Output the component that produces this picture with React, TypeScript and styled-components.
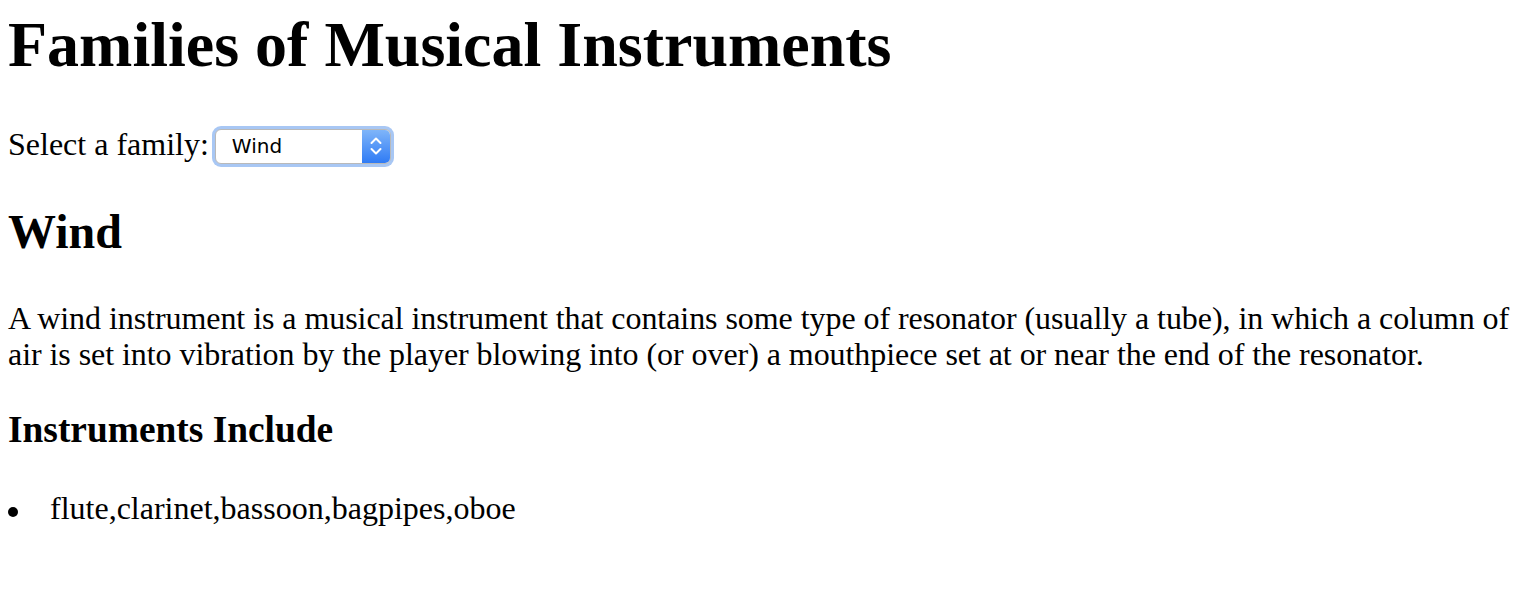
import React from 'react'
import styled, { createGlobalStyle } from 'styled-components'

const GlobalStyle = createGlobalStyle`
  body {
    margin: 8px;
    background: #fff;
    color: #000;
    font-family: "Liberation Serif", "Times New Roman", serif;
    font-size: 32px;
  }
`

const Title = styled.h1`
  font-size: 64px;
  font-weight: bold;
  line-height: 74px;
  margin: 0;
`

const PickerRow = styled.div`
  display: flex;
  align-items: center;
  gap: 6px;
  margin-top: 46px;
  height: 36px;
`

const PickerLabel = styled.label`
  line-height: 32px;
  margin-bottom: 4px;
`

const SelectFrame = styled.div`
  box-sizing: border-box;
  display: flex;
  width: 176px;
  height: 35px;
  border: 1px solid #b9b9b9;
  border-radius: 6px;
  box-shadow: 0 0 0 3px #a8c7f4;
  background: #fff;
  overflow: hidden;
`

const NativeSelect = styled.select`
  appearance: none;
  flex: 1;
  border: none;
  outline: none;
  background: transparent;
  padding: 0 0 0 16px;
  font-family: "DejaVu Sans", "Liberation Sans", sans-serif;
  font-size: 20px;
  color: #000;
`

const Stepper = styled.span`
  display: flex;
  align-items: center;
  justify-content: center;
  width: 28px;
  background: linear-gradient(#7fb5f9, #2f7bf5);
`

const Heading = styled.h2`
  font-size: 48px;
  font-weight: bold;
  line-height: 56px;
  margin: 40px 0 0;
`

const Paragraph = styled.p`
  line-height: 36px;
  letter-spacing: -0.06px;
  margin: 40px 0 0;
`

const SubHeading = styled.h3`
  font-size: 37.4px;
  font-weight: bold;
  line-height: 42px;
  margin: 37px 0 0;
`

const List = styled.ul`
  list-style: none;
  margin: 39px 0 0;
  padding: 0;
`

const Item = styled.li`
  display: flex;
  line-height: 36px;

  &::before {
    content: '';
    flex: none;
    width: 10px;
    height: 10px;
    margin: 17px 32px 0 0;
    border-radius: 50%;
    background: #000;
  }
`

export default function App() {
  return (
    <>
      <GlobalStyle />
      <Title>Families of Musical Instruments</Title>
      <PickerRow>
        <PickerLabel htmlFor="family">Select a family:</PickerLabel>
        <SelectFrame>
          <NativeSelect id="family" defaultValue="wind">
            <option value="wind">Wind</option>
            <option value="string">String</option>
            <option value="percussion">Percussion</option>
          </NativeSelect>
          <Stepper>
            <svg width="14" height="24" viewBox="0 0 14 24" fill="none" stroke="#fff" strokeWidth="2" strokeLinecap="round" strokeLinejoin="round">
              <path d="M2.5 9l4.5-4.5 4.5 4.5" />
              <path d="M2.5 15l4.5 4.5 4.5-4.5" />
            </svg>
          </Stepper>
        </SelectFrame>
      </PickerRow>
      <Heading>Wind</Heading>
      <Paragraph>
        A wind instrument is a musical instrument that contains some type of resonator (usually a tube), in which a column of air is set into vibration by the player blowing into (or over) a mouthpiece set at or near the end of the resonator.
      </Paragraph>
      <SubHeading>Instruments Include</SubHeading>
      <List>
        <Item>flute,clarinet,bassoon,bagpipes,oboe</Item>
      </List>
    </>
  )
}
